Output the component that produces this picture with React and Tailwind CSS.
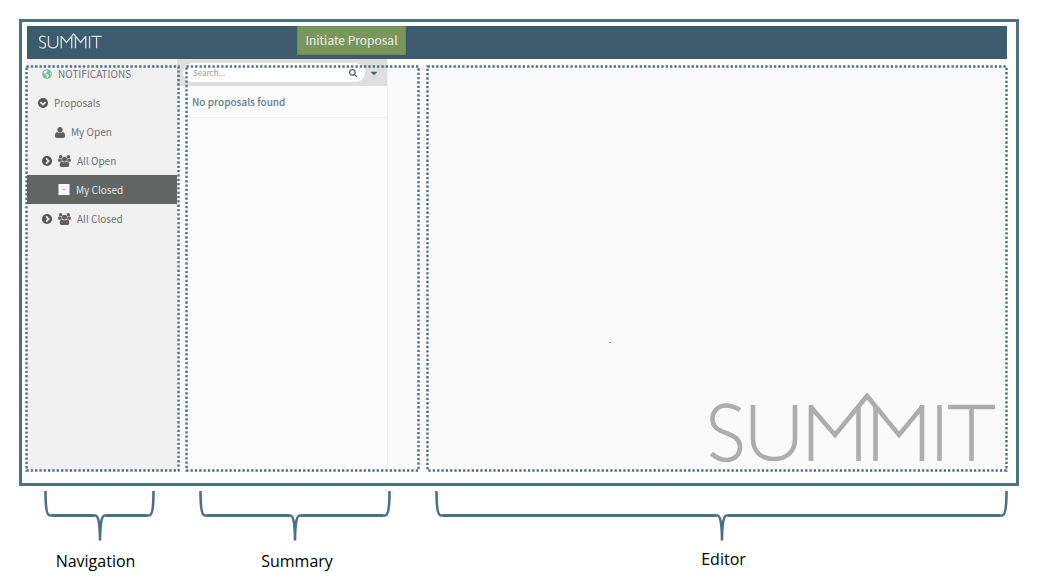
import { FaGlobeAmericas, FaCaretDown } from "react-icons/fa";

const GROUP =
  "M593 896q-162 5-265 128h-134q-82 0-138-40.500t-56-118.500q0-353 124-353 6 0 43.500 21t97.500 42.500 119 21.500q67 0 133-23-5 37-5 66 0 139 81 256zM1664 1533q0 120-73 189.500t-194 69.500h-874q-121 0-194-69.500t-73-189.500q0-53 3.500-103.500t14-109 26.500-108.500 43-97.500 62-81 85.500-53.500 111.500-20q10 0 43 21.500t73 48 107 48 135 21.500 135-21.500 107-48 73-48 43-21.500q61 0 111.500 20t85.500 53.500 62 81 43 97.500 26.500 108.500 14 109 3.500 103.500zM640 256q0 106-75 181t-181 75-181-75-75-181 75-181 181-75 181 75 75 181zM1344 640q0 159-112.500 271.500t-271.500 112.500-271.500-112.500-112.500-271.500 112.500-271.500 271.500-112.500 271.500 112.500 112.500 271.500zM1920 865q0 78-56 118.500t-138 40.500h-134q-103-123-265-128 81-117 81-256 0-29-5-66 66 23 133 23 59 0 119-21.500t97.500-42.500 43.500-21q124 0 124 353zM1792 256q0 106-75 181t-181 75-181-75-75-181 75-181 181-75 181 75 75 181z";
const USER =
  "M1600 1405q0 120-73 189.500t-194 69.500h-874q-121 0-194-69.500t-73-189.500q0-53 3.500-103.500t14-109 26.500-108.500 43-97.500 62-81 85.500-53.500 111.500-20q9 0 42 21.500t74.500 48 108 48 133.500 21.500 133.500-21.500 108-48 74.500-48 42-21.500q61 0 111.500 20t85.500 53.500 62 81 43 97.500 26.500 108.500 14 109 3.500 103.500zM1280 512q0 159-112.500 271.500t-271.500 112.500-271.500-112.500-112.500-271.500 112.500-271.500 271.500-112.500 271.500 112.500 112.500 271.500z";
const SEARCH =
  "M1216 832q0-185-131.500-316.500t-316.500-131.500-316.500 131.500-131.500 316.500 131.500 316.500 316.500 131.500 316.500-131.500 131.500-316.500zM1728 1664q0 52-38 90t-90 38q-54 0-90-38l-343-342q-179 124-399 124-143 0-273.500-55.500t-225-150-150-225-55.500-273.500 55.500-273.500 150-225 225-150 273.500-55.500 273.500 55.500 225 150 150 225 55.500 273.500q0 220-124 399l343 343q37 37 37 90z";

function GroupIcon() {
  return (
    <svg viewBox="0 0 1920 1792" className="h-3 w-[13px]" fill="currentColor" aria-hidden="true">
      <path d={GROUP} />
    </svg>
  );
}

function UserIcon() {
  return (
    <svg viewBox="192 0 1408 1664" className="h-3 w-[10px]" fill="currentColor" aria-hidden="true">
      <path d={USER} />
    </svg>
  );
}

function ArchiveIcon() {
  return (
    <svg viewBox="0 0 12 11" className="h-[11px] w-3" aria-hidden="true">
      <path fill="currentColor" d="M.5 0h11v11H.5z" />
      <path fill="#d5d6d6" d="M.5 2.800h11v.5H.5z" />
      <path fill="#a3a6a4" d="M4.500 4.800h3v1.200h-3z" />
    </svg>
  );
}

function ChevronCircle({ down = false }) {
  return (
    <svg viewBox="0 0 10 10" className="size-[10px]" aria-hidden="true">
      <circle cx="5" cy="5" r="5" fill="currentColor" />
      <path
        d={down ? "M2.400 4.100 5 6.600 7.600 4.100" : "M4.100 2.400 6.600 5 4.100 7.600"}
        fill="none"
        stroke="#f1f1f1"
        strokeWidth="1.700"
      />
    </svg>
  );
}

function SummitLogo({ className, strokeWidth }) {
  return (
    <svg
      viewBox="0 0 286 72"
      className={className}
      fill="none"
      stroke="currentColor"
      strokeWidth={strokeWidth}
      role="img"
      aria-label="Summit"
    >
      <path d="M30 18C25 15 21 13.500 16 13.500C8 13.500 2.500 19.500 2.500 27C2.500 35 8 38 16 41C24 44 30 47 30 55C30 63 24 68 16 68C10 68 6 66 1.500 61.500" />
      <path d="M43 13V47C43 60 52 67 64 67C76 67 85 60 85 47V13" />
      <path d="M100.500 14.500L125 43L157 4L189 43L212.500 14.500" />
      <path d="M101 69V13M148.500 69V15M165.500 69V15M212 69V13M229.500 69V13M238 15H285M261.500 69V15" />
    </svg>
  );
}

function DottedRegion({ className = "" }) {
  return (
    <svg className={"h-full " + className} aria-hidden="true">
      <rect
        x="1.500"
        y="1.500"
        className="h-[calc(100%-3px)] w-[calc(100%-3px)]"
        fill="none"
        stroke="#4b7187"
        strokeWidth="2.400"
        strokeDasharray="2.330 2"
      />
    </svg>
  );
}

function Brace({ label, className = "", labelClass = "" }) {
  const hook = "h-[50px] w-2 shrink-0";
  const stroke = { fill: "none", stroke: "#4b7187", strokeWidth: 2.6 };
  return (
    <div className={className}>
      <div className="flex">
        <svg viewBox="0 0 8 50" className={hook} {...stroke} aria-hidden="true">
          <path d="M1.500 0C1.500 14 2.500 24.500 6 24.500H8" />
        </svg>
        <div className="mt-[23px] h-[3px] flex-1 bg-[#4b7187]" />
        <svg viewBox="0 0 12 50" className="h-[50px] w-3 shrink-0" {...stroke} aria-hidden="true">
          <path d="M0 24.500H1.500C5 24.500 6 38 6 49.500C6 38 7 24.500 10.500 24.500H12" />
        </svg>
        <div className="mt-[23px] h-[3px] flex-1 bg-[#4b7187]" />
        <svg viewBox="0 0 8 50" className={hook} {...stroke} aria-hidden="true">
          <path d="M6.500 0C6.500 14 5.500 24.500 2 24.500H0" />
        </svg>
      </div>
      <p className={"text-center font-['Open_Sans',sans-serif] text-base leading-6 text-black " + labelClass}>
        {label}
      </p>
    </div>
  );
}

const item = "flex h-[29px] w-full items-center text-left";

export default function App() {
  return (
    <div className="min-h-screen bg-white pt-[19px] pr-[25px] pl-[19px] font-['Noto_Sans_CJK_SC',sans-serif]">
      <div className="relative border-[3px] border-[#4b7187] pt-1 pr-[9px] pb-3 pl-[5px]">
        <header className="flex h-[33px] items-start bg-[#3c5b6d]">
          <div className="w-[270px] shrink-0 pt-[7px] pl-3">
            <SummitLogo className="h-4 w-[63px] text-[#d5dde1]" strokeWidth="6" />
          </div>
          <button className="h-[29px] w-[109px] border border-[#6d8c50] bg-[#79965c] pb-[2px] text-[12px] text-[#eef2ea]">
            Initiate Proposal
          </button>
        </header>

        <div className="flex h-[412px]">
          <nav className="w-[150px] shrink-0 bg-[#f1f1f1] text-[10px] text-[#707070]">
            <a href="#notifications" className={item + " gap-[6px] pl-[15px]"}>
              <FaGlobeAmericas className="size-[10px] text-[#6cc093]" />
              NOTIFICATIONS
            </a>
            <button className={item + " gap-[6px] pl-[11px]"}>
              <span className="text-[#555555]"><ChevronCircle down /></span>
              Proposals
            </button>
            <a href="#my-open" className={item + " gap-[6px] pl-[28px]"}>
              <span className="text-[#606060]"><UserIcon /></span>
              My Open
            </a>
            <button className={item + " gap-[6px] pl-[15px]"}>
              <span className="text-[#555555]"><ChevronCircle /></span>
              <span className="text-[#606060]"><GroupIcon /></span>
              All Open
            </button>
            <a href="#my-closed" className={item + " gap-[6px] bg-[#616563] pl-[31px] text-[#e4e4e4]"}>
              <span className="text-white"><ArchiveIcon /></span>
              My Closed
            </a>
            <button className={item + " gap-[6px] pl-[15px]"}>
              <span className="text-[#555555]"><ChevronCircle /></span>
              <span className="text-[#606060]"><GroupIcon /></span>
              All Closed
            </button>
          </nav>

          <section className="w-[211px] shrink-0 border-r border-[#f1f1f1] bg-[#fbfbfb]">
            <div className="flex h-[27px] items-center bg-[#dfdfdf] pl-[6px]">
              <div className="flex h-[19px] w-[182px] items-center rounded-full bg-white pr-2 pl-[10px]">
                <input
                  type="text"
                  aria-label="Search"
                  placeholder="Search..."
                  className="min-w-0 flex-1 bg-transparent text-[8px] outline-none placeholder:text-[#999999]"
                />
                <button aria-label="Search" className="text-[#555555]">
                  <svg viewBox="64 128 1664 1664" className="size-2" fill="currentColor" aria-hidden="true">
                    <path d={SEARCH} />
                  </svg>
                </button>
              </div>
              <button aria-label="Search options" className="ml-1 text-[#47606f]">
                <FaCaretDown className="size-[10px]" />
              </button>
            </div>
            <p className="flex h-8 items-center border-b border-[#f1f1f1] pl-[15px] text-[10px] font-medium text-[#5f7f8f]">
              No proposals found
            </p>
          </section>

          <main className="relative flex flex-1 items-end justify-end bg-[#fafafa] pr-[11px] pb-[7px]">
            <SummitLogo className="h-[72px] w-[286px] text-[#adadad]" strokeWidth="4.600" />
            <span className="absolute top-[283px] left-[221px] h-px w-[2px] bg-[#7c7cf5]" />
          </main>
        </div>

        <div className="pointer-events-none absolute top-[43px] right-2 bottom-[11px] left-[3px] flex">
          <DottedRegion className="w-[155px] shrink-0" />
          <DottedRegion className="ml-[5px] w-[235px] shrink-0" />
          <DottedRegion className="ml-[6px] min-w-0 flex-1" />
        </div>
      </div>

      <div className="flex pt-[5px] pr-[11px] pl-[25px]">
        <Brace label="Navigation" className="w-[111px] shrink-0 pb-2" labelClass="mt-2 pr-2" />
        <Brace label="Summary" className="ml-11 w-[192px] shrink-0" labelClass="mt-2 pl-1" />
        <Brace label="Editor" className="ml-11 flex-1" labelClass="mt-[6px] pl-1" />
      </div>
    </div>
  );
}
